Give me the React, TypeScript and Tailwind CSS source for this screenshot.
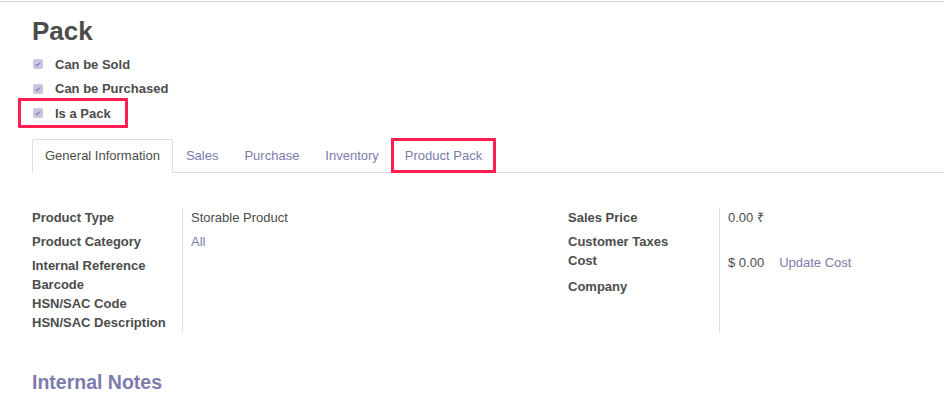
import React from "react"

const font = { fontFamily: '"Liberation Sans", Arial, sans-serif' }

function Check() {
  return (
    <span className="flex h-[10px] w-[10px] items-center justify-center rounded-[2px] bg-[#cac7e1]">
      <svg width="8" height="8" viewBox="0 0 8 8">
        <path d="M1.6 4.2 L3.2 5.7 L6.4 2.4" fill="none" stroke="#8884bb" strokeWidth="1.3" />
      </svg>
    </span>
  )
}

function Flag({ label, boxed }: { label: string; boxed?: boolean }) {
  return (
    <div className="relative flex h-[24.5px] items-center gap-[12px] pl-[1px]">
      <Check />
      <span className="text-[13px] font-bold text-[#4c4c4c]">{label}</span>
      {boxed && (
        <div className="absolute -left-[14px] top-[-3px] h-[30px] w-[110px] border-[3px] border-[#fd1f4f]" />
      )}
    </div>
  )
}

const tabs = ["General Information", "Sales", "Purchase", "Inventory", "Product Pack"]

export default function App() {
  return (
    <div className="min-h-[408px] bg-white pt-[1px] text-[13px] text-[#4c4c4c]" style={font}>
      <div className="border-t border-[#cfcfcf]">
        <div className="pl-[32px]">
          {/* Title */}
          <h1 className="mt-[14px] text-[26px] font-bold leading-[31px] text-[#4c4c4c]">Pack</h1>

          {/* Flags */}
          <div className="mt-[5px]">
            <Flag label="Can be Sold" />
            <Flag label="Can be Purchased" />
            <Flag label="Is a Pack" boxed />
          </div>

          {/* Tabs */}
          <div className="mt-[13px] flex border-b border-[#dddddd]">
            {tabs.map((tab, i) => (
              <div
                key={tab}
                className={
                  i === 0
                    ? "relative -mb-[1px] rounded-t-[2px] border border-[#dddddd] border-b-white bg-white px-[12px] py-[7px] leading-[18px] text-[#4c4c4c]"
                    : "relative -mb-[1px] border border-transparent px-[12px] py-[7px] leading-[18px] text-[#7c7bad]"
                }
              >
                {tab}
                {tab === "Product Pack" && (
                  <div className="absolute -left-[2px] -right-[2px] -top-[2px] -bottom-[1px] border-[3px] border-[#fd1f4f]" />
                )}
              </div>
            ))}
          </div>

          {/* Groups */}
          <div className="mt-[35px] flex">
            <div className="flex w-[536px]">
              <div className="w-[151px] border-r border-[#dddddd] font-bold leading-[19px]">
                <div className="h-[24px]">Product Type</div>
                <div className="h-[24px]">Product Category</div>
                <div className="h-[19px]">Internal Reference</div>
                <div className="h-[19px]">Barcode</div>
                <div className="h-[19px]">HSN/SAC Code</div>
                <div className="h-[19px]">HSN/SAC Description</div>
              </div>
              <div className="pl-[8px] leading-[19px]">
                <div className="h-[24px]">Storable Product</div>
                <div className="h-[24px] text-[#7c7bad]">All</div>
              </div>
            </div>
            <div className="flex">
              <div className="w-[152px] border-r border-[#dddddd] font-bold leading-[19px]">
                <div className="h-[24px]">Sales Price</div>
                <div className="h-[19px]">Customer Taxes</div>
                <div className="h-[26px]">Cost</div>
                <div className="h-[19px]">Company</div>
              </div>
              <div className="pl-[8px] leading-[19px]">
                <div className="h-[24px]">0.00 ₹</div>
                <div className="h-[19px]" />
                <div className="flex h-[26px] gap-[15px] pt-[2px]">
                  <span>$ 0.00</span>
                  <span className="text-[#7c7bad]">Update Cost</span>
                </div>
              </div>
            </div>
          </div>

          {/* Notes */}
          <h3 className="mt-[40px] text-[19.5px] font-bold leading-[21px] text-[#7c7bad]">Internal Notes</h3>
        </div>
      </div>
    </div>
  )
}
